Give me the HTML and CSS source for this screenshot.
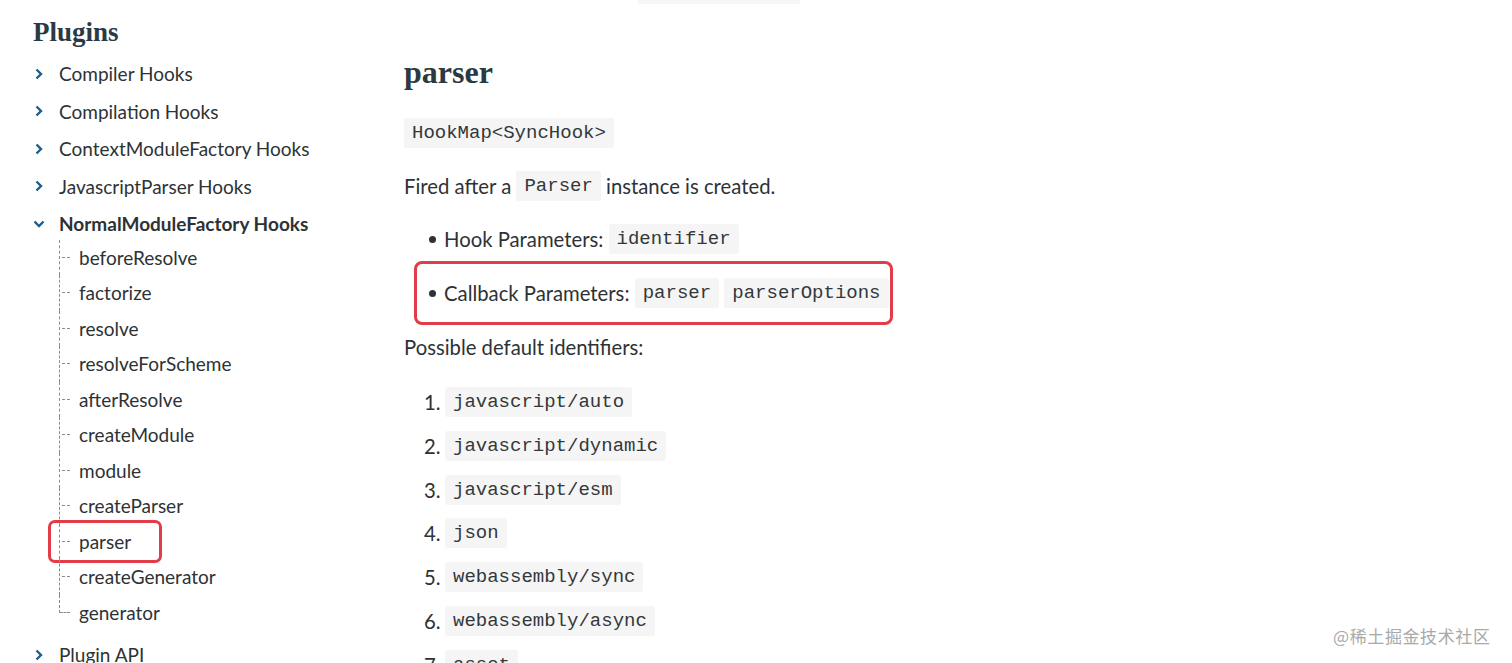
FILE: index.html
```html
<!DOCTYPE html>
<html lang="en">
<head>
<meta charset="utf-8">
<title>parser - Plugins</title>
<link rel="stylesheet" href="styles.css">
</head>
<body>
<div class="page">
  <nav class="side">
    <h3 class="side-title">Plugins</h3>
    <ul class="nav">
      <li class="nav-item"><svg class="chev" viewBox="0 0 8 12"><path d="M1.5 1.5 L6 6 L1.5 10.5"/></svg><span>Compiler Hooks</span></li>
      <li class="nav-item"><svg class="chev" viewBox="0 0 8 12"><path d="M1.5 1.5 L6 6 L1.5 10.5"/></svg><span>Compilation Hooks</span></li>
      <li class="nav-item"><svg class="chev" viewBox="0 0 8 12"><path d="M1.5 1.5 L6 6 L1.5 10.5"/></svg><span>ContextModuleFactory Hooks</span></li>
      <li class="nav-item"><svg class="chev" viewBox="0 0 8 12"><path d="M1.5 1.5 L6 6 L1.5 10.5"/></svg><span>JavascriptParser Hooks</span></li>
      <li class="nav-item open"><svg class="chev down" viewBox="0 0 12 8"><path d="M1.5 1.5 L6 6 L10.5 1.5"/></svg><span>NormalModuleFactory Hooks</span></li>
    </ul>
    <ul class="sub">
      <li class="sub-item">beforeResolve</li>
      <li class="sub-item">factorize</li>
      <li class="sub-item">resolve</li>
      <li class="sub-item">resolveForScheme</li>
      <li class="sub-item">afterResolve</li>
      <li class="sub-item">createModule</li>
      <li class="sub-item">module</li>
      <li class="sub-item">createParser</li>
      <li class="sub-item marked">parser</li>
      <li class="sub-item">createGenerator</li>
      <li class="sub-item last">generator</li>
    </ul>
    <ul class="nav nav-after">
      <li class="nav-item"><svg class="chev" viewBox="0 0 8 12"><path d="M1.5 1.5 L6 6 L1.5 10.5"/></svg><span>Plugin API</span></li>
    </ul>
  </nav>
  <main class="content">
    <div class="stub-row"><div class="stub"></div></div>
    <h2 class="title">parser</h2>
    <p class="line"><code class="code">HookMap&lt;SyncHook&gt;</code></p>
    <p class="line">Fired after a <code class="code">Parser</code> instance is created.</p>
    <ul class="bullets">
      <li class="line">Hook Parameters: <code class="code">identifier</code></li>
      <li class="line marked-row">Callback Parameters: <code class="code">parser</code> <code class="code">parserOptions</code></li>
    </ul>
    <p class="line">Possible default identifiers:</p>
    <ol class="nums">
      <li class="line"><code class="code">javascript/auto</code></li>
      <li class="line"><code class="code">javascript/dynamic</code></li>
      <li class="line"><code class="code">javascript/esm</code></li>
      <li class="line"><code class="code">json</code></li>
      <li class="line"><code class="code">webassembly/sync</code></li>
      <li class="line"><code class="code">webassembly/async</code></li>
      <li class="line"><code class="code">asset</code></li>
    </ol>
  </main>
</div>
<div class="watermark">@稀土掘金技术社区</div>
</body>
</html>
```
FILE: styles.css
```css
html, body {
  margin: 0;
  padding: 0;
  background: #fff;
  overflow: hidden;
  height: 663px;
}
body {
  font-family: "Lato", "Noto Sans", sans-serif;
  font-size: 19px;
  color: #2d3235;
}
.page {
  display: flex;
  align-items: flex-start;
}
.side {
  width: 338px;
  padding-left: 33px;
  flex: none;
}
.side-title {
  font-family: "Liberation Serif", "DejaVu Serif", serif;
  font-weight: 700;
  font-size: 27px;
  line-height: 40px;
  margin: 12px 0 3px;
  color: #2b3a42;
}
.nav, .sub, .bullets, .nums {
  list-style: none;
  margin: 0;
  padding: 0;
}
.nav-item {
  display: flex;
  align-items: center;
  height: 37.5px;
}
.nav-item.open span {
  font-weight: 700;
}
.chev {
  width: 8px;
  height: 12px;
  margin: 0 16px 0 2px;
  fill: none;
  stroke: #1b5e8c;
  stroke-width: 2.4;
  flex: none;
}
.chev.down {
  width: 12px;
  height: 8px;
  margin: 0 14px 0 0;
}
.sub {
  margin-left: 26px;
  margin-top: -3px;
}
.sub-item {
  position: relative;
  height: 35.5px;
  line-height: 35.5px;
  padding-left: 19px;
  border-left: 1px dashed #8c8c8c;
}
.sub-item::before {
  content: "";
  position: absolute;
  left: 2px;
  top: 17px;
  width: 8px;
  border-top: 1px dashed #8c8c8c;
}
.sub-item.last {
  border-left-color: transparent;
}
.sub-item.last::after {
  content: "";
  position: absolute;
  left: -1px;
  top: 0;
  height: 18px;
  border-left: 1px dashed #8c8c8c;
}
.sub-item.last::before {
  left: 0;
  width: 10px;
}
.marked::after {
  content: "";
  position: absolute;
  left: -12px;
  top: -4px;
  width: 108px;
  height: 37px;
  border: 3px solid #e23c48;
  border-radius: 7px;
}
.nav-after {
  margin-top: 6px;
}
.content {
  flex: 1;
  padding-left: 33px;
  font-size: 20.3px;
}
.stub-row {
  height: 4px;
}
.stub {
  margin-left: 234px;
  width: 162px;
  height: 4px;
  background: #f6f6f6;
}
.title {
  font-family: "Liberation Serif", "DejaVu Serif", serif;
  font-weight: 700;
  font-size: 32px;
  line-height: 40px;
  margin: 48px 0 26px;
  color: #2b3a42;
}
.line {
  line-height: 30px;
  margin: 0 0 23px;
}
.code {
  display: inline-block;
  font-family: "Liberation Mono", "DejaVu Sans Mono", monospace;
  font-size: 19px;
  line-height: 31px;
  height: 30px;
  padding: 0 8px;
  background: #f5f5f5;
  color: #33383b;
  border-radius: 3px;
  vertical-align: top;
}
.bullets {
  margin-bottom: 23px;
}
.bullets .line {
  position: relative;
  padding-left: 40px;
  margin-bottom: 24px;
}
.bullets .line::before {
  content: "";
  position: absolute;
  left: 25px;
  top: 12px;
  width: 7px;
  height: 7px;
  border-radius: 50%;
  background: #2d3235;
}
.marked-row::after {
  content: "";
  position: absolute;
  left: 10px;
  top: -17px;
  width: 473px;
  height: 58px;
  border: 3px solid #e23c48;
  border-radius: 8px;
}
.nums {
  counter-reset: n;
  margin-top: 25px;
}
.nums .line {
  counter-increment: n;
  display: flex;
  margin-bottom: 13.8px;
}
.nums .line::before {
  content: counter(n) ".";
  width: 41px;
  padding-left: 20px;
  box-sizing: border-box;
  flex: none;
}
.watermark {
  position: absolute;
  left: 1333px;
  top: 623px;
  font-family: "Noto Sans CJK SC", sans-serif;
  font-size: 17px;
  color: #a9a9a9;
  letter-spacing: 0.6px;
}
```
